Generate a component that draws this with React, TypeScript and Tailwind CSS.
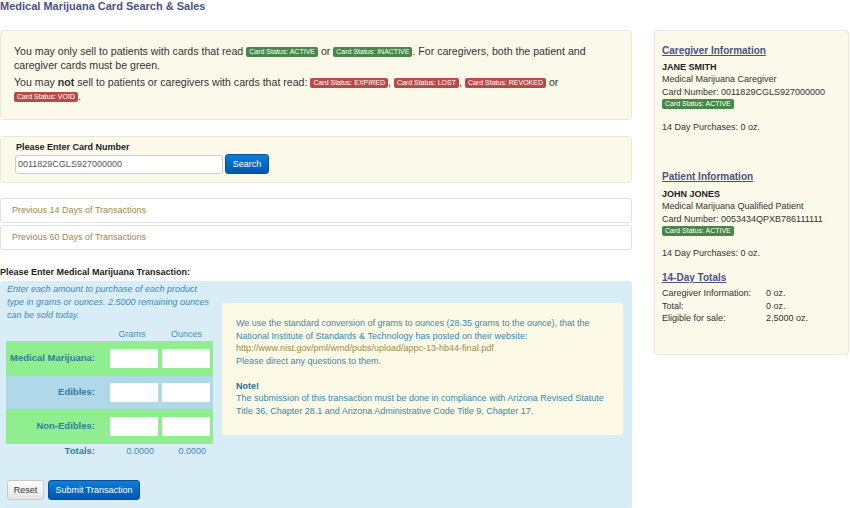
import React from "react";

const Badge = ({ children, red }: { children: React.ReactNode; red?: boolean }) => (
  <span
    className={
      "inline-block text-[7px] leading-[10px] px-[3px] rounded-[2px] text-white align-[1px] " +
      (red ? "bg-[#b94a48]" : "bg-[#468847]")
    }
  >
    {children}
  </span>
);

export default function App() {
  return (
    <div
      className="w-[850px] h-[508px] overflow-hidden bg-white text-[#333]"
      style={{ fontFamily: '"Liberation Sans", Arial, sans-serif' }}
    >
      <div className="text-[11px] leading-[12px] font-bold text-[#4b5183] h-[12px]">
        Medical Marijuana Card Search &amp; Sales
      </div>
      <div className="flex mt-[18px]">
        {/* Left column */}
        <div className="w-[632px] flex flex-col">
          <div className="h-[90px] bg-[#fbf9ea] border border-[#ede8d4] rounded-[4px] pl-[13px] pr-[12px] pt-[13px] text-[10.6px] leading-[14px]">
            <p>
              You may only sell to patients with cards that read <Badge>Card Status: ACTIVE</Badge> or{" "}
              <Badge>Card Status: INACTIVE</Badge>. For caregivers, both the patient and caregiver cards must be
              green.
            </p>
            <p className="mt-[3px]">
              You may <b>not</b> sell to patients or caregivers with cards that read:{" "}
              <Badge red>Card Status: EXPIRED</Badge>, <Badge red>Card Status: LOST</Badge>,{" "}
              <Badge red>Card Status: REVOKED</Badge> or <Badge red>Card Status: VOID</Badge>.
            </p>
          </div>

          <div className="mt-[16px] h-[47px] bg-[#fbf9ea] border border-[#ede8d4] rounded-[4px] pl-[14px] pt-[4px]">
            <div className="text-[9px] leading-[12px] font-bold text-[#222] pl-[1px]">Please Enter Card Number</div>
            <div className="flex items-center mt-[1px]">
              <div className="w-[208px] h-[19px] bg-white border border-[#cccccc] rounded-[3px] text-[9px] leading-[17px] pl-[2px] text-[#555]">
                0011829CGLS927000000
              </div>
              <div className="ml-[2px] w-[44px] h-[20px] rounded-[3px] bg-gradient-to-b from-[#0d7fd6] to-[#0455b5] border border-[#0a4f9c] text-white text-[9px] leading-[18px] text-center">
                Search
              </div>
            </div>
          </div>

          <div className="mt-[15px] h-[25px] bg-white border border-[#e3e3e3] rounded-[3px] pl-[11px] text-[9px] leading-[23px] text-[#9d874a]">
            Previous 14 Days of Transactions
          </div>
          <div className="mt-[2px] h-[25px] bg-white border border-[#e3e3e3] rounded-[3px] pl-[11px] text-[9px] leading-[23px] text-[#9d874a]">
            Previous 60 Days of Transactions
          </div>

          <div className="mt-[16px] text-[9px] leading-[12px] font-bold text-[#222]">
            Please Enter Medical Marijuana Transaction:
          </div>

          <div className="mt-[3px] h-[228px] bg-[#d9edf7] rounded-[4px] flex">
            <div className="w-[213px] pl-[6px] pt-[2px] flex flex-col">
              <div className="pl-[1px] text-[9px] leading-[13px] italic text-[#3f89b0]">
                Enter each amount to purchase of each product type in grams or ounces. 2.5000 remaining ounces can be
                sold today.
              </div>
              <div className="mt-[6px] flex text-[9px] leading-[13px] text-[#4a8db2]">
                <div className="w-[98px]" />
                <div className="w-[56px] text-center">Grams</div>
                <div className="w-[53px] text-center">Ounces</div>
              </div>
              <div className="w-[207px]">
                {[
                  { l: "Medical Marijuana:", bg: "bg-[#90ee90]", h: "h-[35px]" },
                  { l: "Edibles:", bg: "bg-[#afd8e8]", h: "h-[33px]" },
                  { l: "Non-Edibles:", bg: "bg-[#90ee90]", h: "h-[35px]" },
                ].map((r) => (
                  <div key={r.l} className={"flex items-center " + r.bg + " " + r.h}>
                    <div className="w-[98px] pr-[9px] text-right text-[9.5px] font-bold text-[#317e99]">{r.l}</div>
                    <div className="ml-[6px] w-[48px] h-[19px] bg-white" />
                    <div className="ml-[4px] w-[48px] h-[19px] bg-white" />
                  </div>
                ))}
              </div>
              <div className="flex text-[9px] leading-[14px] text-[#3f89b0]">
                <div className="w-[98px] pr-[9px] text-right text-[9.5px] font-bold text-[#317e99]">Totals:</div>
                <div className="w-[54px] pr-[4px] text-right">0.0000</div>
                <div className="w-[52px] pr-[4px] text-right">0.0000</div>
              </div>
              <div className="mt-[22px] flex items-center">
                <div className="ml-[1px] w-[37px] h-[20px] rounded-[3px] bg-gradient-to-b from-white to-[#e4e4e4] border border-[#c8c8c8] text-[9px] leading-[18px] text-center text-[#333]">
                  Reset
                </div>
                <div className="ml-[4px] w-[92px] h-[20px] rounded-[3px] bg-gradient-to-b from-[#0d7fd6] to-[#0455b5] border border-[#0a4f9c] text-white text-[9px] leading-[18px] text-center">
                  Submit Transaction
                </div>
              </div>
            </div>
            <div className="ml-[9px] mt-[22px] w-[401px] h-[132px] bg-[#fcf9e6] rounded-[3px] pl-[14px] pr-[10px] pt-[14px] text-[9px] leading-[12.5px] text-[#3a87ad]">
              <div>
                We use the standard conversion of grams to ounces (28.35 grams to the ounce), that the National
                Institute of Standards &amp; Technology has posted on their website:
              </div>
              <div className="text-[#a38a45]">http://www.nist.gov/pml/wmd/pubs/upload/appc-13-hb44-final.pdf</div>
              <div>Please direct any questions to them.</div>
              <div className="h-[12.5px]" />
              <div className="font-bold text-[#2a6b8c]">Note!</div>
              <div>
                The submission of this transaction must be done in compliance with Arizona Revised Statute Title 36,
                Chapter 28.1 and Arizona Administrative Code Title 9, Chapter 17.
              </div>
            </div>
          </div>
        </div>

        {/* Right column */}
        <div className="ml-[22px] w-[195px] h-[325px] bg-[#fbf9ea] border border-[#ede8d4] rounded-[4px] pl-[7px] pt-[13px] text-[9px]">
          <div className="text-[10px] leading-[14px] font-bold underline text-[#4b5183]">Caregiver Information</div>
          <div className="mt-[3px] leading-[12px] font-bold text-[#222]">JANE SMITH</div>
          <div className="leading-[13px]">Medical Marijuana Caregiver</div>
          <div className="leading-[13px]">Card Number: 0011829CGLS927000000</div>
          <div className="h-[10px] flex">
            <Badge>Card Status: ACTIVE</Badge>
          </div>
          <div className="mt-[12px] leading-[13px]">14 Day Purchases: 0 oz.</div>

          <div className="mt-[36px] text-[10px] leading-[14px] font-bold underline text-[#4b5183]">
            Patient Information
          </div>
          <div className="mt-[4px] leading-[12px] font-bold text-[#222]">JOHN JONES</div>
          <div className="leading-[13px]">Medical Marijuana Qualified Patient</div>
          <div className="leading-[13px]">Card Number: 0053434QPXB786111111</div>
          <div className="h-[10px] flex">
            <Badge>Card Status: ACTIVE</Badge>
          </div>
          <div className="mt-[11px] leading-[13px]">14 Day Purchases: 0 oz.</div>

          <div className="mt-[11px] text-[10px] leading-[14px] font-bold underline text-[#4b5183]">14-Day Totals</div>
          <div className="mt-[2px] leading-[12.5px]">
            <div className="flex">
              <div className="w-[104px]">Caregiver Information:</div>
              <div>0 oz.</div>
            </div>
            <div className="flex">
              <div className="w-[104px]">Total:</div>
              <div>0 oz.</div>
            </div>
            <div className="flex">
              <div className="w-[104px]">Eligible for sale:</div>
              <div>2.5000 oz.</div>
            </div>
          </div>
        </div>
      </div>
    </div>
  );
}
